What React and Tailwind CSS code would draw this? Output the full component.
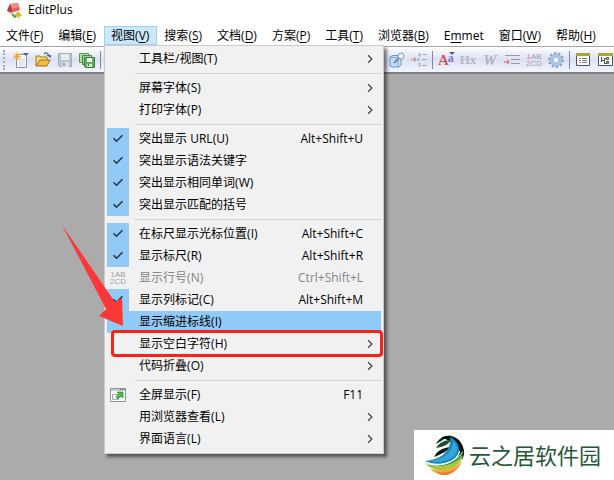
import React from 'react';
import clsx from 'clsx';

const MENUS = [
    { text: '文件', accessKey: 'F' },
    { text: '编辑', accessKey: 'E' },
    { text: '视图', accessKey: 'V', open: true },
    { text: '搜索', accessKey: 'S' },
    { text: '文档', accessKey: 'D' },
    { text: '方案', accessKey: 'P' },
    { text: '工具', accessKey: 'T' },
    { text: '浏览器', accessKey: 'B' },
    { text: 'Emmet' },
    { text: '窗口', accessKey: 'W' },
    { text: '帮助', accessKey: 'H' },
];

const VIEW_MENU = [
    [{ label: '工具栏/视图(T)', submenu: true }],
    [
        { label: '屏幕字体(S)', submenu: true },
        { label: '打印字体(P)', submenu: true },
    ],
    [
        { label: '突出显示 URL(U)', checked: true, shortcut: 'Alt+Shift+U' },
        { label: '突出显示语法关键字', checked: true },
        { label: '突出显示相同单词(W)', checked: true },
        { label: '突出显示匹配的括号', checked: true },
    ],
    [
        { label: '在标尺显示光标位置(I)', checked: true, shortcut: 'Alt+Shift+C' },
        { label: '显示标尺(R)', checked: true, shortcut: 'Alt+Shift+R' },
        { label: '显示行号(N)', icon: 'lines', disabled: true, shortcut: 'Ctrl+Shift+L' },
        { label: '显示列标记(C)', checked: true, shortcut: 'Alt+Shift+M' },
        { label: '显示缩进标线(I)', active: true },
        { label: '显示空白字符(H)', submenu: true, marked: true },
        { label: '代码折叠(O)', submenu: true },
    ],
    [
        { label: '全屏显示(F)', icon: 'fullscreen', shortcut: 'F11' },
        { label: '用浏览器查看(L)', submenu: true },
        { label: '界面语言(L)', submenu: true },
    ],
];

const Svg = ({ children, className = 'w-4 h-4' }) => (
    <svg viewBox="0 0 16 16" fill="none" className={clsx('shrink-0', className)} aria-hidden="true">
        {children}
    </svg>
);

const AppIcon = () => (
    <Svg>
        <path d="M4 2 12 1 14 8 5 11 1 9Z" fill="#e0605c" />
        <path d="M4 2 12 1 13 5 5 7Z" fill="#ee9088" />
        <path d="M4 2 1 9 5 11 6 7Z" fill="#b83b3b" />
        <path d="M1 9 5 11 11 9v2l-6 2-4-2Z" fill="#e8e4e1" />
        <path d="m6 12 3 3 4-5" stroke="#49a94d" strokeWidth="2" />
        <path d="M12.500 10v6M9.500 13h6" stroke="#e2b51e" strokeWidth="2" />
    </Svg>
);

const NewIcon = () => (
    <Svg>
        <path d="M3.500 2.500h9l1 1v12h-10Z" fill="#f8fafd" stroke="#8a94a5" />
        <path d="M5 6h7v8H6Z" fill="#e3e9f3" />
        <path d="M4 0v9M0 4.500h8M1 1.500l6 6M7 1.500l-6 6" stroke="#f3b33c" />
        <circle cx="4" cy="4.500" r="2" fill="#ff9f24" />
        <path d="M10 1h6l-3 3Z" fill="#48658c" />
    </Svg>
);

const OpenIcon = () => (
    <Svg>
        <path d="M1 14V4h4l1 1h6v3" fill="#f8d779" stroke="#a87924" />
        <path d="m1 14 4-6h10l-3 6Z" fill="#f5bc43" stroke="#a66f1d" />
        <path d="M9 2c2-2 4-1 5 2" stroke="#486c9a" strokeWidth="1.300" />
        <path d="M11 3h5v3Z" fill="#486c9a" />
    </Svg>
);

const SaveIcon = () => (
    <Svg>
        <path d="M1.500 1.500h13v13h-12l-1-1Z" fill="#b9c5cf" stroke="#a1adb7" />
        <path d="M4 2h8v6H4Z" fill="#e5ecef" />
        <path d="M5 10h7v5H5Z" fill="#dce3e8" />
        <path d="M6 11h2v3H6Z" fill="#8f9ca6" />
    </Svg>
);

const SaveAllIcon = () => (
    <Svg>
        <path d="M.500 1.500h9v9h-9Z" fill="#b2dca7" stroke="#559a56" />
        <path d="M3.500 3.500h9v9h-9Z" fill="#a5d697" stroke="#438b45" />
        <path d="M5.500 5.500h10v10h-9l-1-1Z" fill="#65af5d" stroke="#347b39" />
        <path d="M8 6h5v4H8Z" fill="#f2fbed" />
        <path d="M8 12h5v3H8Z" fill="#d4edcb" />
        <path d="M9 12h1v2H9Z" fill="#347b39" />
    </Svg>
);

const FindIcon = () => (
    <Svg>
        <path d="M4 3.500h7l1 1V13l-2 2H3l-2-1V5Z" fill="#c3dcf6" stroke="#6b9ad0" />
        <path d="M1.500 5.500H9V15" stroke="#82aadb" />
        <circle cx="12" cy="4" r="3" fill="#edf5fc" stroke="#8299b4" />
        <path d="m10 6-5 5" stroke="#7889a0" strokeWidth="2" />
    </Svg>
);

const OrderIcon = () => (
    <Svg>
        <path d="M0 7.500h4" stroke="#d19d9b" strokeWidth="1.500" />
        <path d="m3 4.500 3 3-3 3Z" fill="#d19d9b" />
        <path d="M8.500 1v4M7.500 6v3M8.500 11v4" stroke="#a1a7b2" strokeWidth="2" strokeDasharray="1.500 .5" />
        <path d="M11 2.500h5M11 7.500h5M11 13.500h5" stroke="#a1a7b2" />
    </Svg>
);

const FontIcon = () => (
    <span className="relative flex w-4 h-4 shrink-0 items-end font-['Liberation_Serif',serif] font-bold">
        <span className="text-[15px] leading-4 text-[#cf5860]">A</span>
        <span className="-ml-px self-start text-[12px] leading-3 text-[#7373ce]">a</span>
        <svg viewBox="0 0 6 3" className="absolute -right-px top-0 w-1.5 h-[3px]" aria-hidden="true">
            <path d="M0 0h6L3 3Z" fill="#455f88" />
        </svg>
    </span>
);

const HexIcon = () => (
    <span className="font-['Liberation_Serif',serif] text-[13px] leading-4 font-bold text-[#b1b6c5]">Hx</span>
);

const WrapIcon = () => (
    <span className="font-['Liberation_Serif',serif] text-[15px] leading-4 font-bold italic text-[#acb1c0]">W</span>
);

const IndentIcon = () => (
    <Svg>
        <path d="M1 3.500h15M7 7.500h9M7 11.500h9" stroke="#9299a8" />
        <path d="M0 10h4" stroke="#d28a87" strokeWidth="1.500" />
        <path d="m3 7 3 3-3 3Z" fill="#d28a87" />
    </Svg>
);

const LinesIcon = ({ digitClass = 'text-[#a5a5a5]' }) => (
    <span className="block w-4 text-center font-['Liberation_Sans',sans-serif] text-[8px] leading-[7px] text-[#9b9fa9]">
        <span className="block"><span className={digitClass}>1</span>AB</span>
        <span className="block"><span className={digitClass}>2</span>CD</span>
    </span>
);

const GearIcon = () => (
    <Svg>
        <circle cx="8" cy="8" r="7" stroke="#8ba5bf" strokeWidth="2" strokeDasharray="2.200 2.200" />
        <circle cx="8" cy="8" r="4.600" fill="#edf2fb" stroke="#a9c9e5" strokeWidth="3" />
        <circle cx="8" cy="8" r="6" stroke="#8ba5bf" strokeWidth=".7" />
        <circle cx="8" cy="8" r="3" fill="#eef2fb" stroke="#8ba5bf" strokeWidth=".7" />
    </Svg>
);

const ListPaneIcon = () => (
    <Svg>
        <path d="M1.500 1.500h13v12h-13Z" fill="#fff" stroke="#435476" />
        <path d="M1 1h14v3H1Z" fill="#a7a72c" />
        <path d="M4 6.500h2M4 8.500h2M4 10.500h2" stroke="#d57148" />
        <path d="M7 6.500h5M7 8.500h5M7 10.500h5" stroke="#6e7b91" />
    </Svg>
);

const TreePaneIcon = () => (
    <Svg>
        <path d="M1.500 1.500h14v12h-14Z" fill="#fff" stroke="#435476" />
        <path d="M1 1h15v3H1Z" fill="#a7a72c" />
        <path d="M4.500 5v5M4 8.500h4M7.500 6v6M7 6.500h2M7 11.500h2" stroke="#4a5361" />
        <path d="M9.500 5.500h2v2h-2Z" fill="#f3c73e" stroke="#665e36" />
        <path d="M9.500 9.500h2v2h-2Z" fill="#6dbd54" stroke="#446c3e" />
    </Svg>
);

const FullscreenIcon = () => (
    <Svg>
        <path d="M.500 1.500h15v13H.500Z" fill="#fcfcfc" stroke="#8d969d" />
        <path d="M1 2h14v2H1Z" fill="#c1cbd3" />
        <path d="M10 2.500h1m1 0h1m1 0h1" stroke="#586574" />
        <path d="M2.500 7.500h6v5h-6Z" stroke="#9fa8af" />
        <path d="M7 5h6v6l-2-2-3 3-2-2 3-3Z" fill="#4cbd43" stroke="#258a2a" strokeWidth=".7" />
    </Svg>
);

const CheckIcon = () => (
    <Svg className="w-3 h-3">
        <path d="m2 7 4 4 8-8" stroke="#263442" strokeWidth="2" />
    </Svg>
);

const ChevronIcon = () => (
    <Svg className="w-2.5 h-2.5">
        <path d="m5 2 6 6-6 6" stroke="#444" strokeWidth="2" />
    </Svg>
);

const TOOLS_LEFT = [
    { name: '新建', Icon: NewIcon },
    { name: '打开', Icon: OpenIcon },
    { name: '保存', Icon: SaveIcon },
    { name: '全部保存', Icon: SaveAllIcon },
];

const TOOLS_RIGHT = [
    [
        { name: '查找', Icon: FindIcon },
        { name: '排序', Icon: OrderIcon },
    ],
    [
        { name: '字体', Icon: FontIcon },
        { name: '十六进制', Icon: HexIcon },
        { name: '自动换行', Icon: WrapIcon },
        { name: '缩进', Icon: IndentIcon },
        { name: '行号', Icon: () => <LinesIcon digitClass="text-[#d98a85]" /> },
        { name: '设置', Icon: GearIcon },
    ],
    [
        { name: '列表', Icon: ListPaneIcon },
        { name: '目录', Icon: TreePaneIcon },
    ],
];

const ToolButton = ({ name, Icon }) => (
    <button type="button" aria-label={name} className="flex w-[22px] h-[22px] shrink-0 items-center justify-center">
        <Icon />
    </button>
);

const ToolDivider = () => <div className="w-px h-[18px] mx-[2px] shrink-0 bg-[#83889a]" />;

const MenuItem = ({ item }) => (
    <button
        type="button"
        role={item.checked ? 'menuitemcheckbox' : 'menuitem'}
        aria-checked={item.checked}
        disabled={item.disabled}
        className={clsx(
            'relative flex w-full h-[22px] items-center text-left',
            item.active && 'bg-[#91c9f7]',
            item.disabled ? 'text-[#858585]' : 'text-black',
        )}>
        <span className={clsx('flex w-[22px] h-full mr-2.5 items-center justify-center', item.checked && 'bg-[#91c9f7]')}>
            {item.checked && <CheckIcon />}
            {item.icon === 'lines' && <LinesIcon />}
            {item.icon === 'fullscreen' && <FullscreenIcon />}
        </span>
        <span className="flex-1">{item.label}</span>
        {item.shortcut && <span className="mr-[18px]">{item.shortcut}</span>}
        {item.submenu && <span className="mr-1.5"><ChevronIcon /></span>}
        {item.marked && (
            <span className="absolute left-1 -right-0.5 -top-[3px] -bottom-[2px] z-10 rounded-[4px] border-3 border-[#fe2016]" />
        )}
    </button>
);

const ViewMenu = () => (
    <div
        role="menu"
        className="absolute left-0 top-full z-20 w-[280px] border border-[#ccc] bg-[#f1f1f1] px-[2px] pt-[2px] pb-[3px] shadow-[3px_3px_3px_rgba(0,0,0,0.5)]">
        {VIEW_MENU.map((group, i) => (
            <React.Fragment key={group[0].label}>
                {i > 0 && <div role="separator" className="ml-7 my-[3px] h-px bg-[#d3d3d3]" />}
                {group.map((item) => <MenuItem key={item.label} item={item} />)}
            </React.Fragment>
        ))}
        {/* Pointer towards the highlighted entry */}
        <svg viewBox="0 0 64 104" className="absolute -left-[44px] top-[178px] w-16 h-[104px] z-10 pointer-events-none" aria-hidden="true">
            <path d="M1 1 54 78 61 74 62 102 38 92 45 85Z" fill="#fb3838" />
        </svg>
    </div>
);

const MenuBar = () => (
    <nav className="flex h-[19px] -ml-px shrink-0 whitespace-nowrap">
        {MENUS.map(({ text, accessKey, open }) => (
            <div key={text} className="relative">
                <button
                    type="button"
                    aria-expanded={open}
                    className={clsx(
                        'h-[19px] pl-1.5 pr-[7px] border',
                        open ? 'border-[#99d1ff] bg-[#cce8ff]' : 'border-transparent',
                    )}>
                    {accessKey ? <>{text}(<u className="underline-offset-2">{accessKey}</u>)</> : <>E<u className="underline-offset-2">m</u>met</>}
                </button>
                {open && <ViewMenu />}
            </div>
        ))}
    </nav>
);

const SiteLogo = () => (
    <svg viewBox="0 0 40 40" className="w-10 h-10 shrink-0" aria-hidden="true">
        <path d="M11 9C14 3 20 0 27 1c-6 1-10 5-16 8Z" fill="#11301d" />
        <path d="M16 3c8-5 19-1 22 9 2 5 1 9-1 13C36 14 30 6 16 3Z" fill="#08130e" />
        <path d="M11 13c3-5 8-8 15-8-3 5-8 7-15 8Z" fill="#1c4e2b" />
        <path d="M9 22c3-6 8-9 16-10-3 5-9 7-16 10Z" fill="#0b1712" />
        <path d="M25 2c9 4 12 14 6 20-7 7-21 9-31 4 13-1 27-8 25-24Z" fill="#1787c0" />
        <path d="M28 6c6 5 5 12 0 16-6 5-17 6-24 4 13-1 24-8 24-20Z" fill="#36a5d8" />
        <path d="M34 8c3 6 1 12-3 16 4 0 6-4 7-8-1-4-2-6-4-8Z" fill="#0d1d15" />
        <path d="M0 28c14 6 30 1 38-13-1 16-24 26-38 13Z" fill="#3d9143" />
        <path d="M2 30c14 3 28 0 36-10-2 14-24 21-36 10Z" fill="#a9c83a" />
        <path d="M5 34c13 3 25 0 32-8-4 13-21 18-32 8Z" fill="#f5a53a" />
        <path d="M10 37c9 2 17 0 23-5-5 8-15 11-23 5Z" fill="#f07a28" />
        <path d="M1 29c15 3 29-1 37-12" stroke="#f8fbef" strokeWidth=".7" fill="none" />
    </svg>
);

export default function App() {
    return (
        <div className="relative flex min-h-screen flex-col overflow-hidden bg-white text-[12px] leading-4 text-black font-['Open_Sans','Noto_Sans_CJK_SC',sans-serif]">
            <header className="flex h-[26px] shrink-0 items-start gap-1.5 pl-1.5 pt-[2px]">
                <AppIcon />
                <h1>EditPlus</h1>
            </header>

            <MenuBar />

            <div role="toolbar" className="mt-px flex h-7 shrink-0 items-center border-t border-b-2 border-t-[#a5a5a5] border-b-[#7c7f86] bg-linear-to-b from-white via-[#dce1f3] to-[#f3f5fd] pl-[3px]">
                <div className="w-[3px] h-5 mr-1 shrink-0 border-l-2 border-dotted border-[#a7abb8]" />
                {TOOLS_LEFT.map((tool) => <ToolButton key={tool.name} {...tool} />)}
                <ToolDivider />
                <div className="w-[283px] shrink-0" />
                {TOOLS_RIGHT.map((group, i) => (
                    <React.Fragment key={group[0].name}>
                        {i > 0 && <ToolDivider />}
                        {group.map((tool) => <ToolButton key={tool.name} {...tool} />)}
                    </React.Fragment>
                ))}
            </div>

            <main className="flex-1 bg-[#ababab]" />

            <div className="absolute right-0 bottom-0 flex h-[50px] w-[200px] items-center gap-1 bg-white pl-[11px] text-[22px] leading-8 text-[#24583a]">
                <SiteLogo />
                <span className="whitespace-nowrap">云之居软件园</span>
            </div>
        </div>
    );
}
